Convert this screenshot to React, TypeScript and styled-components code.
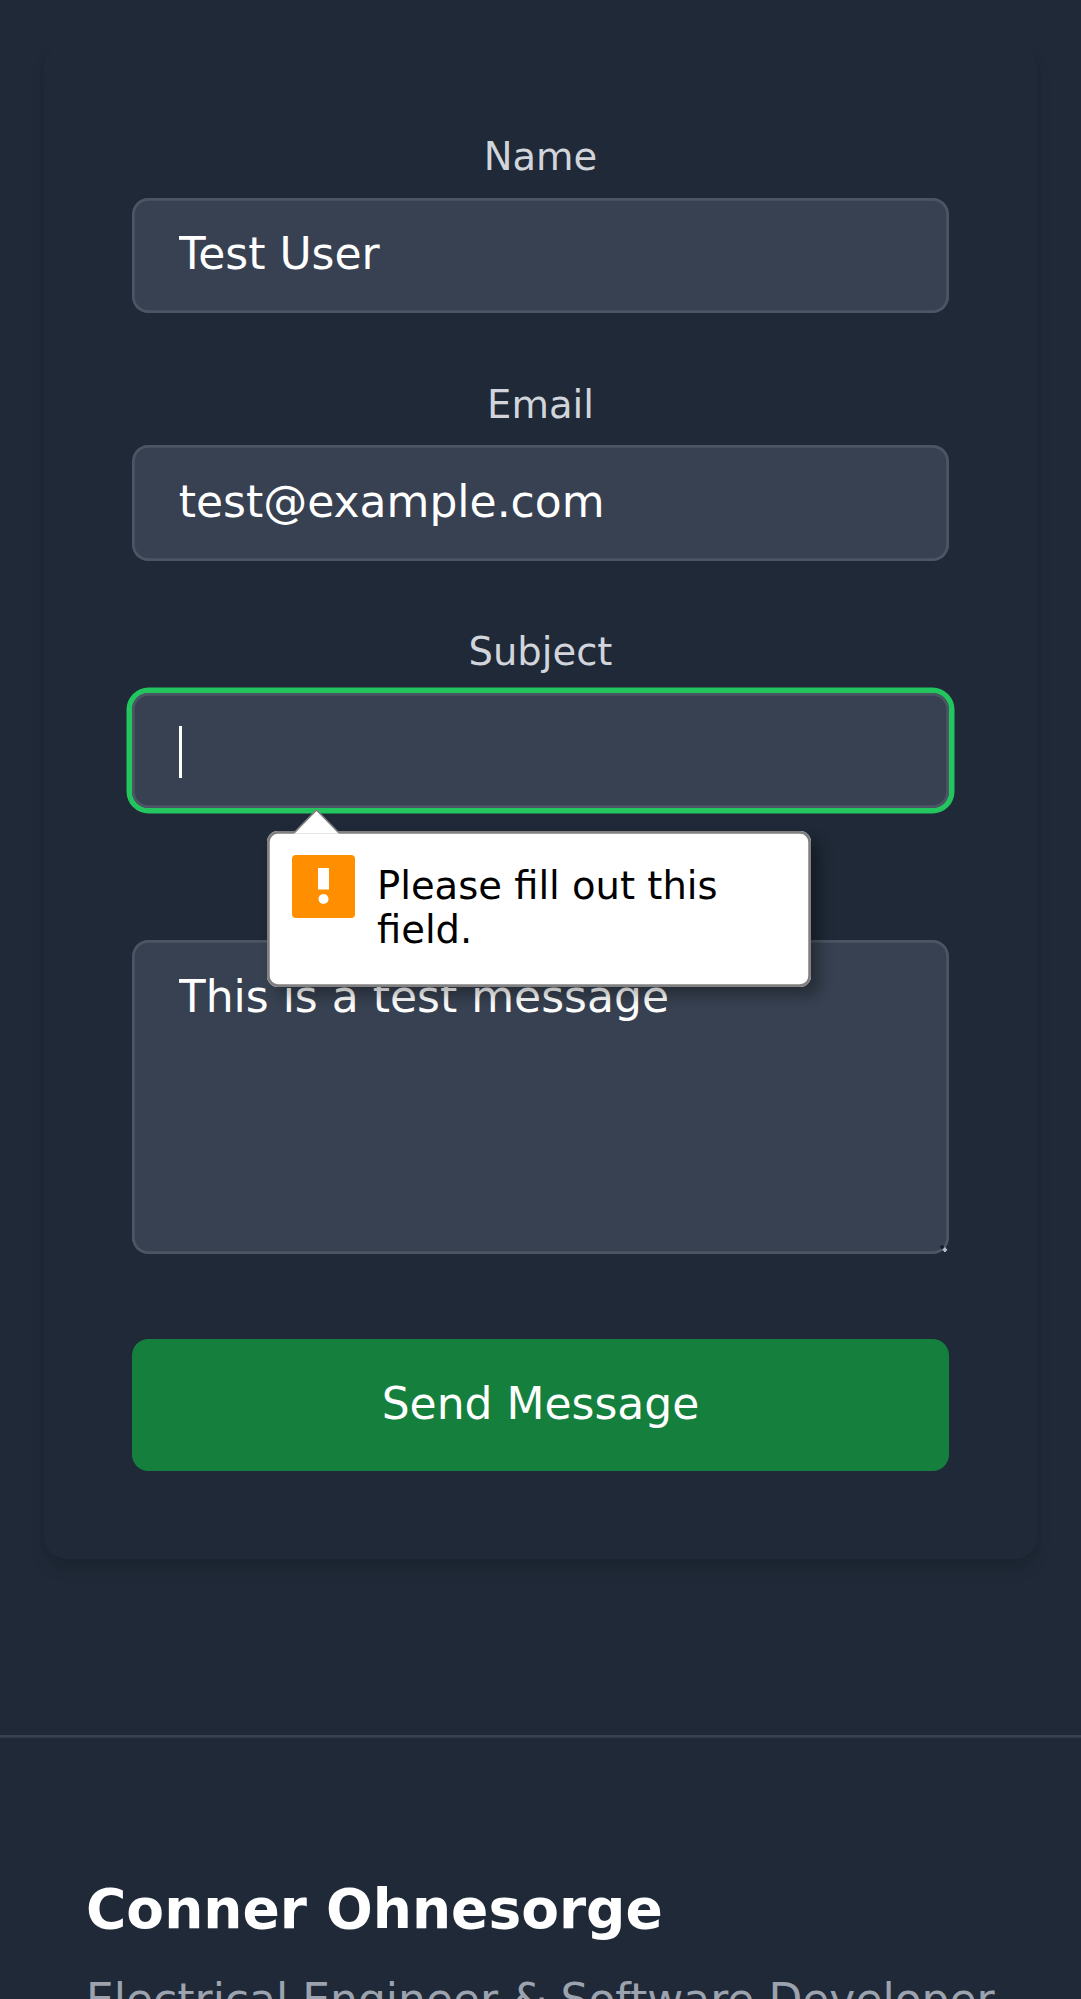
import React from "react";
import styled, { createGlobalStyle, css } from "styled-components";

const GlobalStyle = createGlobalStyle`
  *, *::before, *::after { box-sizing: border-box; }
  html, body { margin: 0; background: #1f2937; }
  body {
    height: 1999px;
    overflow: hidden;
    font-family: "DejaVu Sans", sans-serif;
    color: #ffffff;
  }
`;

const Page = styled.div`
  height: 1999px;
  overflow: hidden;
  background: #1f2937;
`;

const ContactSection = styled.section`
  padding: 43.5px 44px 176px;
`;

const Card = styled.form`
  display: flex;
  flex-direction: column;
  gap: 66px;
  padding: 88px;
  border-radius: 22px;
  background: #1f2937;
  box-shadow:
    0 11px 16.5px -2.75px rgba(0, 0, 0, 0.1),
    0 5.5px 11px -5.5px rgba(0, 0, 0, 0.1);
`;

const FieldGroup = styled.div<{ $tall?: boolean }>`
  position: relative;
  display: flex;
  flex-direction: column;
  padding: ${(p) => (p.$tall ? "66px 0 19px" : "0")};
`;

const Label = styled.label`
  height: 65.5px;
  margin-top: 0.5px;
  font-size: 38.5px;
  line-height: 49px;
  text-align: center;
  color: #d1d5db;
`;

const Field = styled.div<{ $focused?: boolean; $tall?: boolean }>`
  position: relative;
  display: flex;
  height: ${(p) => (p.$tall ? "313.5px" : "115.5px")};
  padding: 23.75px 46.75px;
  border-radius: 16.5px;
  background: #374151;
  box-shadow: inset 0 0 0 2.75px #4b5563${(p) => (p.$focused ? ", 0 0 0 5.5px #22c55e" : "")};
`;

const control = css`
  flex: 1;
  min-width: 0;
  margin: 0;
  padding: 0;
  border: 0;
  outline: 0;
  background: transparent;
  color: #ffffff;
  font: 44px/66px "DejaVu Sans", sans-serif;
`;

const TextInput = styled.input`
  ${control}
  height: 66px;
`;

const TextArea = styled.textarea`
  ${control}
  height: 264px;
  resize: none;
  overflow: hidden;
`;

const Caret = styled.span`
  width: 3px;
  height: 52px;
  margin-top: 9.5px;
  background: #ffffff;
`;

const ResizeGrip = styled.svg`
  position: absolute;
  right: 0;
  bottom: 0;
  width: 14px;
  height: 14px;
`;

const SubmitButton = styled.button`
  height: 132px;
  padding: 0 0 2px;
  border: 0;
  border-radius: 16.5px;
  background: #15803d;
  color: #ffffff;
  font: 44px/66px "DejaVu Sans", sans-serif;
`;

const Bubble = styled.div`
  position: absolute;
  z-index: 2;
  top: 204px;
  left: 135px;
  display: flex;
  gap: 22.3px;
  width: 544px;
  height: 156px;
  padding: 24.5px 24.7px;
  border-radius: 11px;
  background: #ffffff;
  box-shadow:
    inset 0 0 0 2.75px #808080,
    9px 9px 14px rgba(0, 0, 0, 0.3);
`;

const BubbleArrow = styled.svg`
  position: absolute;
  top: -22px;
  left: 27px;
  width: 46px;
  height: 26px;
`;

const WarningIcon = styled.svg`
  flex: none;
  width: 63px;
  height: 63px;
`;

const BubbleText = styled.p`
  margin: 9px 0 0;
  font-size: 38.5px;
  line-height: 44px;
  color: #000000;
`;

const Footer = styled.footer`
  padding: 136px 86px 0;
  box-shadow: inset 0 2.75px 0 #374151;
`;

const FooterName = styled.h3`
  margin: 0;
  font-size: 55px;
  font-weight: 700;
  line-height: 77px;
`;

const FooterRole = styled.p`
  margin: 19px 0 0;
  font-size: 44px;
  line-height: 66px;
  white-space: nowrap;
  color: #9ca3af;
`;

function ValidationBubble() {
  return (
    <Bubble role="alert">
      <BubbleArrow viewBox="0 0 46 26">
        <path d="M0.5 25 V24 L22.5 1 L44.5 24 V25 Z" fill="#ffffff" />
        <path d="M0.5 23.5 L22.5 1 L44.5 23.5" fill="none" stroke="#808080" strokeWidth="1.6" />
        <path d="M1 24.5 H44" stroke="#e6e6e6" strokeWidth="1" />
      </BubbleArrow>
      <WarningIcon viewBox="0 0 63 63">
        <rect width="63" height="63" rx="4" fill="#ff8f00" />
        <rect x="26" y="13" width="11" height="21.5" fill="#ffffff" />
        <circle cx="31.5" cy="44" r="5" fill="#ffffff" />
      </WarningIcon>
      <BubbleText>Please fill out this field.</BubbleText>
    </Bubble>
  );
}

export default function App() {
  return (
    <>
      <GlobalStyle />
      <Page>
        <ContactSection>
          <Card noValidate onSubmit={(e) => e.preventDefault()}>
            <FieldGroup>
              <Label htmlFor="name">Name</Label>
              <Field>
                <TextInput id="name" defaultValue="Test User" spellCheck={false} />
              </Field>
            </FieldGroup>
            <FieldGroup>
              <Label htmlFor="email">Email</Label>
              <Field>
                <TextInput id="email" type="email" defaultValue="test@example.com" />
              </Field>
            </FieldGroup>
            <FieldGroup>
              <Label htmlFor="subject">Subject</Label>
              <Field $focused>
                <Caret />
                <TextInput id="subject" />
              </Field>
              <ValidationBubble />
            </FieldGroup>
            <FieldGroup $tall>
              <Field $tall>
                <TextArea id="message" defaultValue="This is a test message" spellCheck={false} />
                <ResizeGrip viewBox="0 0 14 14">
                  <path d="M5 7h4M7 5v4" stroke="#1a202b" strokeWidth="2" />
                  <path d="M7.7 9.7h4.4M9.9 7.5v4.4" stroke="#b9bdc3" strokeWidth="2" />
                </ResizeGrip>
              </Field>
            </FieldGroup>
            <SubmitButton type="submit">Send Message</SubmitButton>
          </Card>
        </ContactSection>
        <Footer>
          <FooterName>Conner Ohnesorge</FooterName>
          <FooterRole>Electrical Engineer &amp; Software Developer</FooterRole>
        </Footer>
      </Page>
    </>
  );
}
